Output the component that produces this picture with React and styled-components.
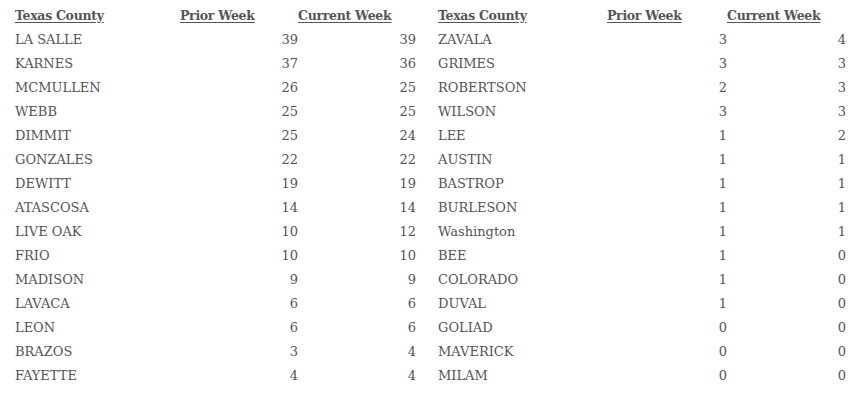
import React from "react";
import styled, { createGlobalStyle } from "styled-components";

const Global = createGlobalStyle`
  html, body { margin: 0; padding: 0; background: #fff; }
  body { font-family: "DejaVu Serif", "Liberation Serif", serif; color: #555; }
`;

const Page = styled.div`
  display: flex;
  gap: 22px;
  padding: 3px 0 0 15px;
`;

const Table = styled.div`
  display: grid;
  grid-template-columns: ${(p) => p.$cols};
  grid-auto-rows: 24px;
  align-items: center;
`;

const Head = styled.div`
  font-weight: bold;
  font-size: 12.5px;
  color: #555;
  text-decoration: underline;
  text-underline-offset: 2px;
  white-space: nowrap;
  letter-spacing: -0.3px;
`;

const Name = styled.div`
  font-size: 13px;
  white-space: nowrap;
`;

const Num = styled.div`
  font-size: 13px;
  text-align: right;
`;

const left = [
  ["LA SALLE", 39, 39],
  ["KARNES", 37, 36],
  ["MCMULLEN", 26, 25],
  ["WEBB", 25, 25],
  ["DIMMIT", 25, 24],
  ["GONZALES", 22, 22],
  ["DEWITT", 19, 19],
  ["ATASCOSA", 14, 14],
  ["LIVE OAK", 10, 12],
  ["FRIO", 10, 10],
  ["MADISON", 9, 9],
  ["LAVACA", 6, 6],
  ["LEON", 6, 6],
  ["BRAZOS", 3, 4],
  ["FAYETTE", 4, 4],
];

const right = [
  ["ZAVALA", 3, 4],
  ["GRIMES", 3, 3],
  ["ROBERTSON", 2, 3],
  ["WILSON", 3, 3],
  ["LEE", 1, 2],
  ["AUSTIN", 1, 1],
  ["BASTROP", 1, 1],
  ["BURLESON", 1, 1],
  ["Washington", 1, 1],
  ["BEE", 1, 0],
  ["COLORADO", 1, 0],
  ["DUVAL", 1, 0],
  ["GOLIAD", 0, 0],
  ["MAVERICK", 0, 0],
  ["MILAM", 0, 0],
];

function CountyTable({ rows, cols }) {
  return (
    <Table $cols={cols}>
      <Head>Texas County</Head>
      <Head>Prior Week</Head>
      <Head>Current Week</Head>
      {rows.map(([n, p, c]) => (
        <React.Fragment key={n}>
          <Name>{n}</Name>
          <Num>{p}</Num>
          <Num>{c}</Num>
        </React.Fragment>
      ))}
    </Table>
  );
}

export default function App() {
  return (
    <>
      <Global />
      <Page>
        <CountyTable rows={left} cols="165px 118px 118px" />
        <CountyTable rows={right} cols="169px 120px 119px" />
      </Page>
    </>
  );
}
